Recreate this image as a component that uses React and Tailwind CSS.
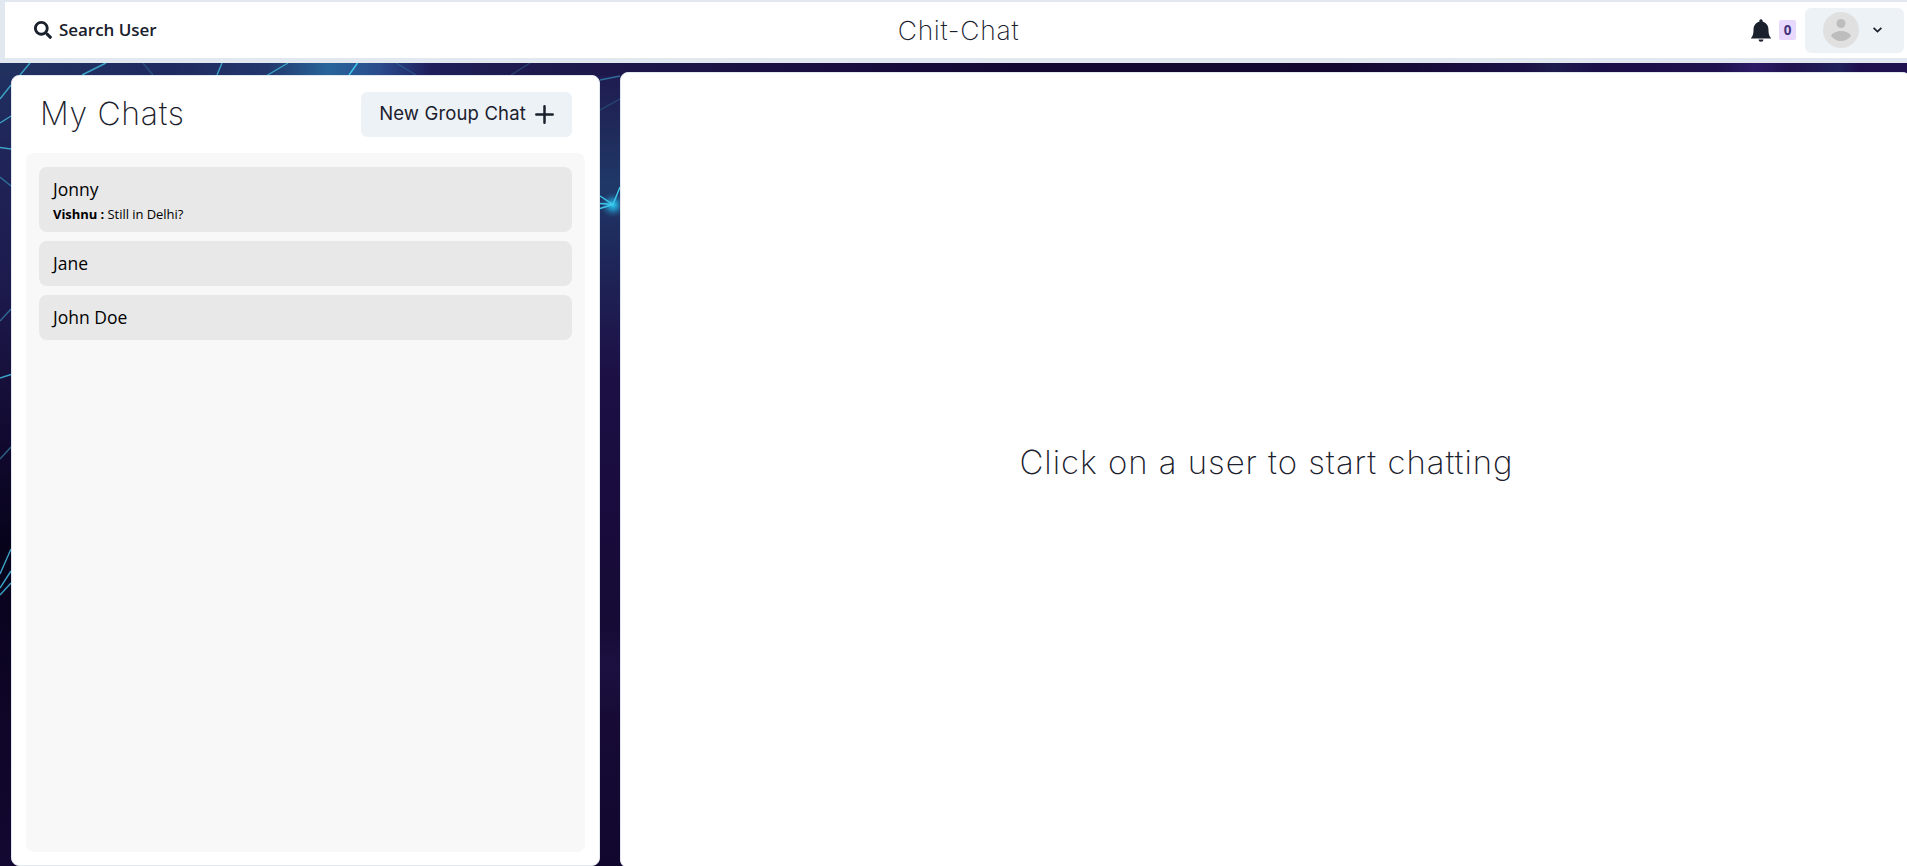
import { FaSearch } from "react-icons/fa";

const chats = [
  { name: "Jonny", sender: "Vishnu", text: "Still in Delhi?" },
  { name: "Jane" },
  { name: "John Doe" },
];

function Backdrop() {
  return (
    <svg className="absolute inset-0 h-full w-full" viewBox="0 0 1907 866" preserveAspectRatio="none">
      <defs>
        <linearGradient id="left" x1="0" y1="0" x2="0" y2="1">
          <stop offset="0.07" stopColor="#1f3161" />
          <stop offset="0.17" stopColor="#202559" />
          <stop offset="0.33" stopColor="#1d1a4d" />
          <stop offset="0.5" stopColor="#120a30" />
          <stop offset="0.63" stopColor="#07031b" />
          <stop offset="0.8" stopColor="#0e0526" />
          <stop offset="1" stopColor="#120831" />
        </linearGradient>
        <linearGradient id="mid" x1="0" y1="0" x2="0" y2="1">
          <stop offset="0.08" stopColor="#1f1a50" />
          <stop offset="0.16" stopColor="#1f2c5c" />
          <stop offset="0.21" stopColor="#1f3868" />
          <stop offset="0.28" stopColor="#1e2a5c" />
          <stop offset="0.36" stopColor="#1e1c50" />
          <stop offset="0.44" stopColor="#1c0f44" />
          <stop offset="0.6" stopColor="#190b3c" />
          <stop offset="0.72" stopColor="#160b35" />
          <stop offset="0.77" stopColor="#1c1041" />
          <stop offset="0.83" stopColor="#170b35" />
          <stop offset="1" stopColor="#11072e" />
        </linearGradient>
        <linearGradient id="top" x1="0" y1="0" x2="1" y2="0">
          <stop offset="0" stopColor="#21315f" />
          <stop offset="0.09" stopColor="#1f2a60" />
          <stop offset="0.14" stopColor="#22376c" />
          <stop offset="0.172" stopColor="#27659a" />
          <stop offset="0.2" stopColor="#2a4a8c" />
          <stop offset="0.225" stopColor="#1f1f5c" />
          <stop offset="0.26" stopColor="#1e1b50" />
          <stop offset="0.33" stopColor="#1d1749" />
          <stop offset="0.46" stopColor="#170b3c" />
          <stop offset="0.55" stopColor="#130830" />
          <stop offset="0.7" stopColor="#12082f" />
          <stop offset="0.8" stopColor="#1b1045" />
          <stop offset="0.815" stopColor="#1d1c4d" />
          <stop offset="0.84" stopColor="#1b0f48" />
          <stop offset="0.9" stopColor="#1f114d" />
          <stop offset="0.92" stopColor="#2c1a66" />
          <stop offset="0.94" stopColor="#20134f" />
          <stop offset="0.965" stopColor="#1f215a" />
          <stop offset="0.975" stopColor="#200f4e" />
          <stop offset="1" stopColor="#1f1150" />
        </linearGradient>
        <radialGradient id="glow">
          <stop offset="0" stopColor="#2ccdf5" />
          <stop offset="0.35" stopColor="#249acb" stopOpacity="0.8" />
          <stop offset="1" stopColor="#1f3a6c" stopOpacity="0" />
        </radialGradient>
      </defs>
      <rect width="1907" height="866" fill="url(#mid)" />
      <rect width="300" height="866" fill="url(#left)" />
      <rect width="1907" height="76" fill="url(#top)" />
      <circle cx="613" cy="205" r="14" fill="url(#glow)" />
      <g stroke="#3aa2c6" strokeWidth="1.4" fill="none">
        <path d="M30 63 20 75M11 85 0 99M11 116 0 123M0 147.500 11 149M222 63 217 75M288 63 266 76" />
        <path d="M106 63 82 75M0 378 11 374.500M0 574 11 549M0 588 11 571M0 595 11 583" />
        <path d="M0 177 11 186M0 321 11 309M0 459 11 447M600 80 620 76" opacity="0.6" />
        <path d="M143 63 153 75M396 63 416 75M530 63 511 75M600 110 620 99" opacity="0.3" />
        <path d="M357.500 63 349 75M600 196 613 204.500 600 208.500M600 203.500 613 204.500 620 187" stroke="#3fc8ec" />
      </g>
    </svg>
  );
}

function Header() {
  return (
    <header className="relative flex h-[63px] items-center justify-between border-t-2 border-b-5 border-l-5 border-[#e2e8f0] bg-white pr-[3px] pl-[29px] text-[#1a202c]">
      <button className="flex flex-1 items-center gap-[7px]">
        <FaSearch size={18} />
        <span className="font-['Open_Sans',sans-serif] text-[17px] font-[550] tracking-[-0.050px]">Search User</span>
      </button>
      <h1 className="pr-[21px] font-['Inter',sans-serif] text-[26.500px] leading-none font-extralight tracking-[0.700px]">Chit-Chat</h1>
      <div className="flex flex-1 items-center justify-end">
        <svg className="mt-px" width="24" height="24" viewBox="0 0 24 24" fill="currentColor">
          <path d="M21.500 18.500a.5.500 0 0 1 0 1h-19a.5.500 0 0 1 0-1C4 16.500 4.500 14.500 4.500 11c0-4.500 2.500-7.500 5.800-8.200C10.300 1 11 .3 12 .3s1.700.7 1.700 2.500c3.300.7 5.800 3.700 5.800 8.200 0 3.500.5 5.500 2 7.500zM9.500 20.500h5a2.500 2.200 0 0 1-5 0z" />
        </svg>
        <span className="ml-[6px] flex h-5 w-[17px] items-center justify-center rounded-xs bg-[#e9d8fd] pt-px font-['Open_Sans',sans-serif] text-[13.500px] font-bold text-[#44337a]">0</span>
        <button className="ml-[9px] flex h-[45px] w-[99px] items-center rounded-md bg-[#edf2f7] pl-[18px]">
          <svg width="36" height="36" viewBox="0 0 36 36">
            <circle cx="18" cy="18" r="18" fill="#e0e0e0" />
            <circle cx="18" cy="11.500" r="4.500" fill="#bdbdbd" />
            <path d="M8 23.500C10 20.500 14 19 18 19s8 1.500 10 4.500C26 27 22 29 18 29S10 27 8 23.500z" fill="#bdbdbd" />
          </svg>
          <svg className="ml-[13.500px]" width="9" height="6" viewBox="0 0 9 6" fill="none" stroke="currentColor" strokeWidth="1.700">
            <path d="M.6.800 4.500 4.600 8.400.8" />
          </svg>
        </button>
      </div>
    </header>
  );
}

function ChatList() {
  return (
    <section className="mt-[3px] flex h-[791px] w-[589px] flex-col rounded-lg border border-[#e2e8f0] bg-white px-[14px] pb-[13px]">
      <div className="flex h-[77px] items-center justify-between pr-[13px] pb-[1px] pl-[14px]">
        <h2 className="font-['Inter',sans-serif] text-[32px] font-extralight tracking-[0.700px] text-[#1a202c]">My Chats</h2>
        <button className="flex h-[45px] w-[211px] items-center justify-center gap-[9px] rounded-md bg-[#edf2f7] text-[#1a202c]">
          <span className="font-['Inter',sans-serif] text-[18.500px] tracking-[0.150px] whitespace-nowrap">New Group Chat</span>
          <svg width="19" height="19" viewBox="0 0 19 19" stroke="currentColor" strokeWidth="2.500" strokeLinecap="round">
            <path d="M9.500 1.300v16.400M1.300 9.500h16.400" />
          </svg>
        </button>
      </div>
      <ul className="flex flex-1 flex-col gap-[9px] rounded-lg bg-[#f8f8f8] px-[13px] pt-[14px] font-['Open_Sans',sans-serif] text-black">
        {chats.map((c) => (
          <li key={c.name} className="rounded-lg bg-[#e8e8e8] px-[14px] py-[9px]">
            <p className="text-[17.500px] leading-[27px]">{c.name}</p>
            {c.text && (
              <p className="pt-[2px] text-[13px] leading-[18px] tracking-[-0.050px]">
                <b>{c.sender} : </b>
                {c.text}
              </p>
            )}
          </li>
        ))}
      </ul>
    </section>
  );
}

export default function App() {
  return (
    <div className="relative h-[866px] w-full overflow-hidden">
      <Backdrop />
      <Header />
      <main className="relative flex h-[803px] items-start gap-5 pt-[9px] pl-[11px]">
        <ChatList />
        <section className="-mr-1 flex h-[796px] flex-1 items-center justify-center rounded-lg border border-[#e2e8f0] bg-white pb-[14px]">
          <p className="pl-[2px] font-['Inter',sans-serif] text-[33px] font-extralight tracking-[0.950px] text-[#1a202c]">Click on a user to start chatting</p>
        </section>
      </main>
    </div>
  );
}
